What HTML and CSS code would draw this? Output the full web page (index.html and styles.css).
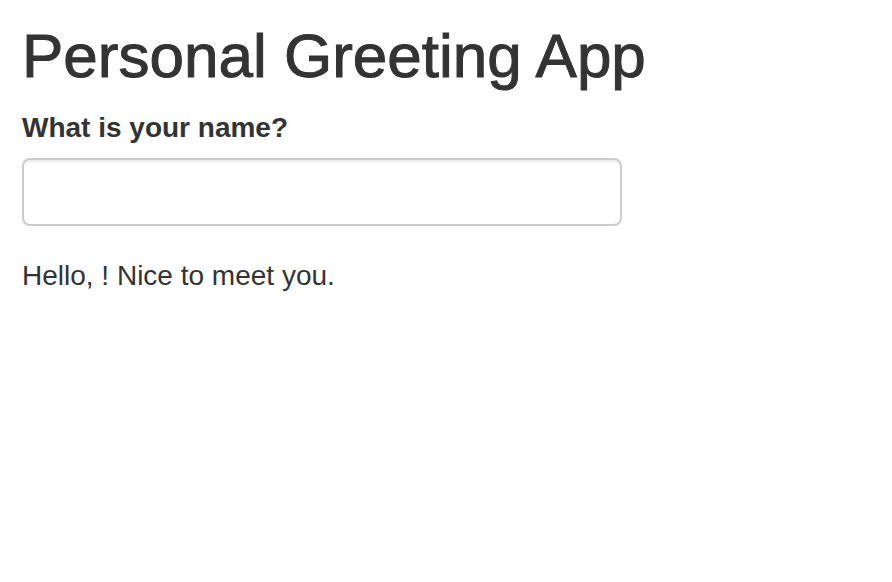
FILE: index.html
```html
<!DOCTYPE html>
<html lang="en">
<head>
<meta charset="utf-8">
<title>Personal Greeting App</title>
<link rel="stylesheet" href="styles.css">
</head>
<body>
<div class="container">
  <h1 class="title">Personal Greeting App</h1>
  <div class="form-group">
    <label class="label" for="name">What is your name?</label>
    <input class="text-input" id="name" type="text">
  </div>
  <div class="greeting">Hello, ! Nice to meet you.</div>
</div>
</body>
</html>
```

FILE: styles.css
```css
html, body {
  margin: 0;
  padding: 0;
  background: #fff;
}
body {
  font-family: "Liberation Sans", Arial, Helvetica, sans-serif;
  font-size: 28px;
  line-height: 40px;
  color: #333;
}
.container {
  padding: 0 22px;
}
.title {
  margin: 22px 0 0 0;
  font-size: 62px;
  line-height: 1.1;
  font-weight: 500;
  color: #333;
  -webkit-text-stroke: 1px #333;
}
.form-group {
  margin-top: 18px;
  margin-bottom: 30px;
}
.label {
  display: block;
  font-weight: bold;
  margin-bottom: 10px;
}
.text-input {
  display: block;
  box-sizing: border-box;
  width: 600px;
  height: 68px;
  margin: 0;
  padding: 12px 24px;
  border: 2px solid #ccc;
  border-radius: 8px;
  background: #fff;
  font-family: inherit;
  font-size: 28px;
  color: #555;
  box-shadow: inset 0 2px 2px rgba(0,0,0,0.075);
  outline: none;
}
.greeting {
  margin: 0;
}
```
